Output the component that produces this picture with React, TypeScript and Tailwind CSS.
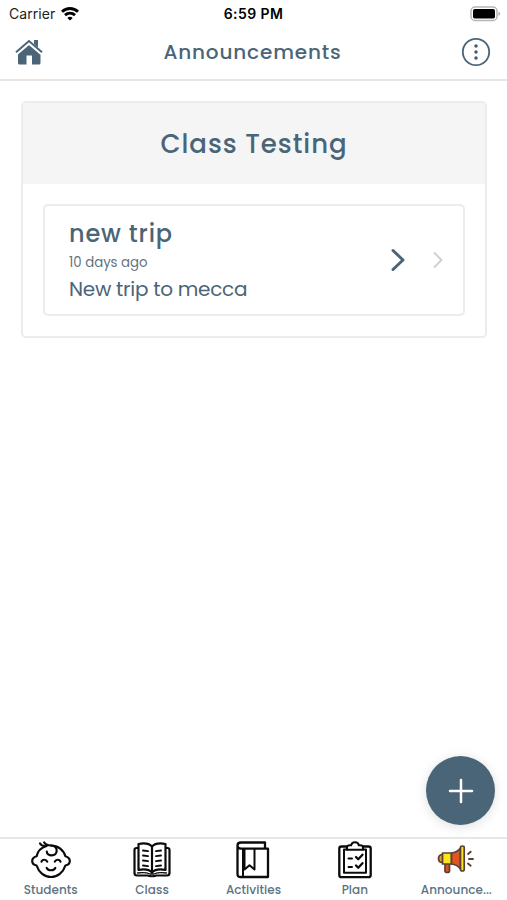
import React from "react";

const stroke = {
  fill: "none",
  stroke: "#0b0b0b",
  strokeWidth: 2.5,
  strokeLinecap: "round" as const,
  strokeLinejoin: "round" as const,
};

function Wifi() {
  return (
    <svg width="18" height="14" viewBox="0 0 18 14" fill="none" stroke="#000" strokeWidth="2.9">
      <path d="M1 4.700C5.500.5 12.500.5 17 4.700" />
      <path d="M4 8.200c2.900-2.600 7.100-2.600 10 0" />
      <path d="M9 13.600 6.300 10.900c1.600-1.400 3.800-1.400 5.400 0z" fill="#000" stroke="none" />
    </svg>
  );
}

function Battery() {
  return (
    <svg width="31" height="16" viewBox="0 0 31 16">
      <rect x="1" y="1" width="26" height="13.500" rx="4" fill="#fff" stroke="#b5b5b5" strokeWidth="1.500" />
      <rect x="3" y="3" width="22" height="9.500" rx="1.800" fill="#000" />
      <path d="M28.500 5.500c2 .8 2 3.700 0 4.500z" fill="#aaa" />
    </svg>
  );
}

function Home() {
  return (
    <svg width="28" height="27" viewBox="0 0 28 27">
      <path d="M19 1h4v9l-4-4z" fill="#4a6578" />
      <path d="M14 5 25.500 14.500V24a1.500 1.500 0 0 1-1.500 1.500h-7v-9h-5.500v9H4.500A1.500 1.500 0 0 1 3 24v-9.500z" fill="#4a6578" />
      <path d="M1.300 14.300 14 3.500l12.700 10.800" fill="none" stroke="#fff" strokeWidth="4" />
      <path d="M1 13.300 14 2l13 11.300" fill="none" stroke="#4a6578" strokeWidth="2" />
    </svg>
  );
}

function More() {
  return (
    <svg width="30" height="30" viewBox="0 0 30 30" fill="#3f5c70">
      <circle cx="15" cy="15" r="13.200" fill="none" stroke="#4a6578" strokeWidth="1.800" />
      <circle cx="15" cy="9" r="1.750" />
      <circle cx="15" cy="15" r="1.750" />
      <circle cx="15" cy="21" r="1.750" />
    </svg>
  );
}

function Baby() {
  return (
    <svg width="40" height="38" viewBox="0 0 40 38" {...stroke} strokeWidth={2.2}>
      <path d="M15.500 5C10.500 6.500 6.500 10.500 5.600 15.300 2.500 16.200 1.200 18 1.200 20s1.700 4 4.400 4.500C7.800 31.500 13.500 36 20 36s12.200-4.500 14.400-11.500c2.700-.5 4.400-2.500 4.400-4.500s-1.300-3.800-4.400-4.700C32.800 9 27 4.500 20 4.500c-3 0-5.500-.8-6.800-3" />
      <path d="M9 2.500c1 1.700 2.700 2.500 5 2.500M20 4.500c4 0 6 2.500 5.700 5.500-.3 2.700-2.500 4.300-5 4.300-2.700 0-4.900-1.500-4.900-3.800" />
      <path d="M10.500 20.700c.8-2.600 4.700-2.600 5.700 0M23.800 20.700c1-2.600 4.900-2.600 5.700 0M15.700 27c1.500 3 7.100 3 8.600 0" />
    </svg>
  );
}

function Book() {
  return (
    <svg width="38" height="36" viewBox="0 0 38 36" {...stroke} strokeWidth={2.2}>
      <path d="M19 4.500C16 1.300 10.500 1 5.500 2v26c5-1 10.500-.7 13.500 2.500C22 27.300 27.500 27 32.500 28V2C27.500 1 22 1.300 19 4.500z" />
      <path d="M19 4.500v26" />
      <path d="M5 6H3.500Q1.500 6 1.500 8v23q0 2.500 2.500 2.500h11c.8 1 7.200 1 8 0h11q2.500 0 2.500-2.500V8q0-2-2-2H33" />
      <path d="M4.500 31c5-.7 9.500-.4 12.500 1h4c3-1.400 7.500-1.700 12.500-1" strokeWidth="1.300" />
      <path d="M10 8.500l5 .6M10 13.500l5 .6M10 18.500l5 .6M10 23.500l5 .6M28 8.500l-5 .6M28 13.500l-5 .6M28 18.500l-5 .6M28 23.500l-5 .6" strokeWidth="1.900" />
    </svg>
  );
}

function Activities() {
  return (
    <svg width="34" height="38" viewBox="0 0 34 38" {...stroke} strokeWidth={2.3}>
      <path d="M29 7V1.500H5C3 1.500 1.500 2.700 1.500 4.500S3 7.700 5 7.700h27v28.300H4.500c-1.800 0-3-1-3-2.800V4.500" />
      <path d="M7 8v27.500" strokeWidth="2" />
      <path d="M8.500 8v20.500l5-4.200 5 4.200V8" strokeWidth="2" />
    </svg>
  );
}

function Plan() {
  return (
    <svg width="34" height="38" viewBox="0 0 34 38" {...stroke} strokeWidth={2.3}>
      <path d="M9 5.500H3.500c-1.300 0-2.200.8-2.200 2V34c0 1.300.9 2.200 2.200 2.200h27c1.300 0 2.200-.9 2.200-2.200V7.500c0-1.200-.9-2-2.200-2H25" />
      <path d="M9 8.500H6v23.300h22V8.500h-3" strokeWidth="2" />
      <path d="M9 8.800V6.500c0-1.500 1-2.200 3-2.200h1.200c.5-4 7.100-4 7.600 0H22c2 0 3 .7 3 2.200v2.300z" fill="#fff" strokeWidth="2" />
      <path d="M10.500 17.500H14M10.500 26H14" strokeWidth="2" />
      <path d="m18 16 2.200 2.200 4.300-4.500M18 24.500l2.200 2.200 4.300-4.500" strokeWidth="2.300" />
    </svg>
  );
}

function Megaphone() {
  return (
    <svg width="38" height="30" viewBox="0 0 38 30" stroke="#594039" strokeWidth="1.700" strokeLinejoin="round">
      <path d="M8 17.500h4.500V26q0 1.500-2.200 1.500T8 26z" fill="#d9541e" />
      <path d="M6 9.500H4.500C2.500 10 1.500 11.500 1.500 13.500S2.500 17 4.500 17.500H6z" fill="#e7a02d" />
      <path d="M5.500 8h9v11h-9z" fill="#fbe51f" />
      <path d="M14.500 8c4-.3 7-2.500 9-5v21c-2-2.500-5-4.700-9-5z" fill="#e25420" />
      <path d="M23.500 2.500c0-2 3.700-2 3.700 0v22c0 2-3.700 2-3.700 0z" fill="#fbe51f" />
      <path d="m31 9 2.700-2.300M32 14h4M31 18.500l2.700 2.200" fill="none" strokeWidth="1.900" strokeLinecap="round" />
    </svg>
  );
}

const tabs = [
  { label: "Students", icon: <Baby /> },
  { label: "Class", icon: <Book /> },
  { label: "Activities", icon: <Activities /> },
  { label: "Plan", icon: <Plan /> },
  { label: "Announce...", icon: <Megaphone /> },
];

export default function App() {
  return (
    <div className="relative flex h-[900px] w-full flex-col overflow-hidden bg-white font-['Poppins','Inter',sans-serif] text-[#4a6578]">
      <div className="grid h-[27px] shrink-0 grid-cols-3 items-center font-['Inter',sans-serif] text-[14px] leading-[27px] text-black">
        <div className="flex items-center gap-[6px] pl-[9px]">
          <span className="tracking-[0.05px] text-[#222]">Carrier</span>
          <Wifi />
        </div>
        <span className="text-center font-semibold tracking-[0.4px]">6:59 PM</span>
        <div className="flex justify-end pr-[6px]">
          <Battery />
        </div>
      </div>
      <header className="flex h-[54px] shrink-0 items-center justify-between border-b-2 border-[#e6e6e6] pb-[2px] pl-[15px] pr-[16px]">
        <Home />
        <h1 className="pl-[1px] text-[20px] font-medium leading-[30px] tracking-[0.85px]">Announcements</h1>
        <More />
      </header>
      <main className="flex-1 pl-[21px] pr-[20px] pt-5">
        <section className="h-[237px] rounded-[5px] border-2 border-[#ececec]">
          <h2 className="flex h-[81px] items-center justify-center bg-[#f5f5f5] pt-[2px] text-[26px] font-medium tracking-[0.95px]">Class Testing</h2>
          <div className="mx-5 mt-5 flex h-[112px] items-center rounded-[5px] border-2 border-[#ececec] pl-6 pr-[19px]">
            <div className="flex-1">
              <h3 className="text-[24px] font-medium leading-[32px] tracking-[0.85px]">new trip</h3>
              <p className="pt-[1px] text-[13.3px] leading-[24px] text-[#64747f]">10 days ago</p>
              <p className="text-[20px] leading-[28px] tracking-[-0.28px]">New trip to mecca</p>
            </div>
            <svg width="16" height="24" viewBox="0 0 16 24" className="mr-[26px]" fill="none" stroke="#4a6578" strokeWidth="3" strokeLinecap="round" strokeLinejoin="round">
              <path d="m3 2.500 10 9.500L3 21.500" />
            </svg>
            <svg width="12" height="18" viewBox="0 0 12 18" fill="none" stroke="#d0d0d0" strokeWidth="2">
              <path d="m2 1.500 7.500 7.500L2 16.500" />
            </svg>
          </div>
        </section>
      </main>
      <nav className="grid h-[63px] shrink-0 grid-cols-5 border-t-2 border-[#e6e6e6]">
        {tabs.map((tab) => (
          <div key={tab.label} className="flex flex-col items-center">
            <div className="flex h-[42px] items-center justify-center">{tab.icon}</div>
            <span className="text-[12px] font-medium leading-[18px] tracking-[0.05px] text-[#5c7382]">{tab.label}</span>
          </div>
        ))}
      </nav>
      <button aria-label="Add" className="absolute bottom-[75px] right-3 flex size-[69px] items-center justify-center rounded-full bg-[#4a6578] shadow-[0_2px_12px_rgba(0,0,0,0.13)]">
        <svg width="26" height="26" viewBox="0 0 26 26" stroke="#fff" strokeWidth="2.500" strokeLinecap="round">
          <path d="M13 2v22M2 13h22" />
        </svg>
      </button>
    </div>
  );
}
